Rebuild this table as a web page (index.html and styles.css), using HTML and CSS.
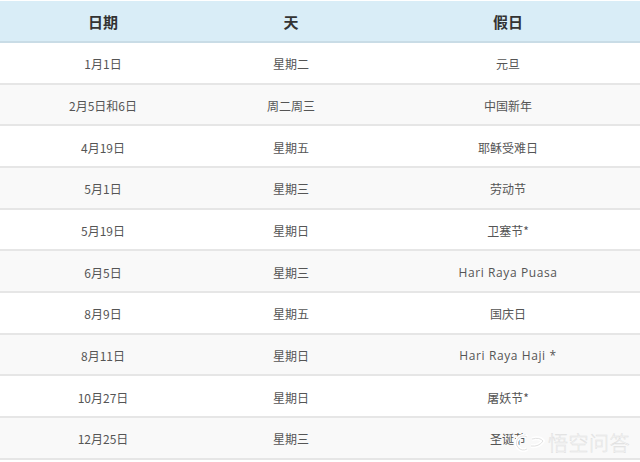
FILE: index.html
```html
<!DOCTYPE html>
<html lang="zh">
<head>
<meta charset="utf-8">
<link rel="stylesheet" href="styles.css">
</head>
<body>
<div class="page">
<table class="holidays">
  <colgroup><col class="c1"><col class="c2"><col class="c3"></colgroup>
  <thead>
    <tr><th>日期</th><th>天</th><th>假日</th></tr>
  </thead>
  <tbody>
    <tr><td>1月1日</td><td>星期二</td><td>元旦</td></tr>
    <tr><td>2月5日和6日</td><td>周二周三</td><td>中国新年</td></tr>
    <tr><td>4月19日</td><td>星期五</td><td>耶稣受难日</td></tr>
    <tr><td>5月1日</td><td>星期三</td><td>劳动节</td></tr>
    <tr><td>5月19日</td><td>星期日</td><td>卫塞节*</td></tr>
    <tr><td>6月5日</td><td>星期三</td><td class="latin">Hari Raya Puasa</td></tr>
    <tr><td>8月9日</td><td>星期五</td><td>国庆日</td></tr>
    <tr><td>8月11日</td><td>星期日</td><td class="latin">Hari Raya Haji *</td></tr>
    <tr><td>10月27日</td><td>星期日</td><td>屠妖节*</td></tr>
    <tr><td>12月25日</td><td>星期三</td><td>圣诞节</td></tr>
  </tbody>
</table>
<div class="watermark">
  <svg class="wm-logo" width="32" height="20" viewBox="0 0 32 20">
    <path d="M13 4 A7 7 0 1 0 13 16" fill="none" stroke="#ffffff" stroke-width="4"/>
    <path d="M13 4 A7 7 0 1 0 13 16" fill="none" stroke="#e2e2e2" stroke-width="1"/>
    <path d="M18 6 Q26 4 29 8 Q25 14 17 13" fill="none" stroke="#ffffff" stroke-width="4"/>
    <path d="M18 6 Q26 4 29 8 Q25 14 17 13" fill="none" stroke="#e2e2e2" stroke-width="1"/>
  </svg>
  <span class="wm-text">悟空问答</span>
</div>
</div>
</body>
</html>
```
FILE: styles.css
```css
html, body {
  margin: 0;
  padding: 0;
  background: #ffffff;
}
.page {
  position: relative;
  width: 640px;
  height: 462px;
  overflow: hidden;
  font-family: "Noto Sans CJK SC", "Open Sans", sans-serif;
}
.holidays {
  width: 640px;
  border-collapse: collapse;
  table-layout: fixed;
  margin-top: 1px;
}
.c1 { width: 206px; }
.c2 { width: 170px; }
.c3 { width: 264px; }
.holidays th {
  background: #d9edf7;
  color: #333333;
  font-size: 15px;
  font-weight: bold;
  height: 40px;
  padding: 0;
  text-align: center;
  border-bottom: 2px solid #c9dce6;
}
.holidays td {
  height: 37.67px;
  padding: 2px 0 0 0;
  text-align: center;
  font-size: 12px;
  color: #555555;
  border-bottom: 2px solid #e6e6e6;
}
.holidays tbody tr:nth-child(even) td {
  background: #f9f9f9;
}
.holidays td.latin {
  font-family: "Open Sans", sans-serif;
  letter-spacing: 0.6px;
}
.watermark {
  position: absolute;
  left: 514px;
  top: 428px;
  display: flex;
  align-items: center;
  gap: 2px;
}
.wm-text {
  font-family: "Noto Sans CJK SC", sans-serif;
  font-size: 20px;
  font-weight: 300;
  color: #ffffff;
  letter-spacing: 0.5px;
  -webkit-text-stroke: 0.5px #dedede;
}
```
